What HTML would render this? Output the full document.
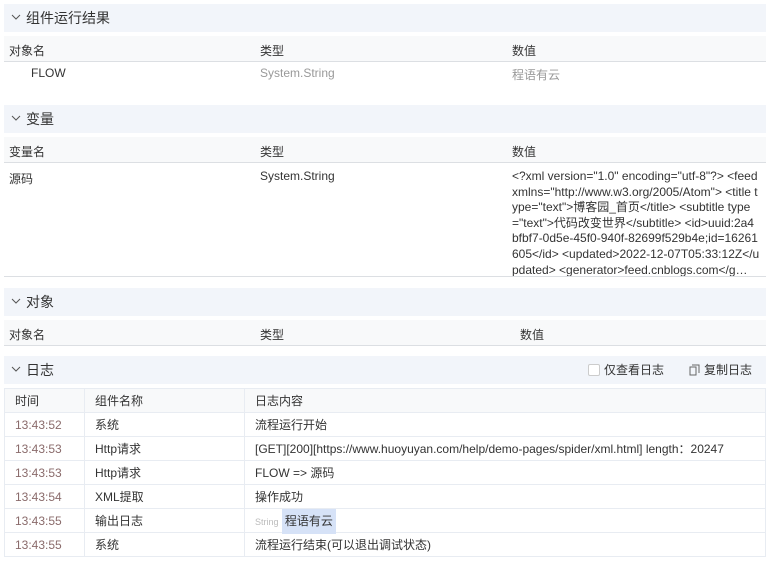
<!DOCTYPE html>
<html><head><meta charset="utf-8"><style>
*{margin:0;padding:0;box-sizing:border-box}
body{width:770px;height:561px;background:#fff;font-family:"Liberation Sans","Noto Sans CJK SC",sans-serif;font-size:12px;color:#333;position:relative;overflow:hidden}
.a{position:absolute}
.hd{position:absolute;left:4px;width:762px;height:28px;background:#f2f5fa;font-size:14px;line-height:28px;padding-left:22px;color:#333}
.hd svg{position:absolute;left:7px;top:10px}
.th{position:absolute;left:4px;width:762px;height:26px;background:#f8f9fa;border-bottom:1px solid #dcdfe3}
.t{position:absolute;white-space:nowrap}
.log{position:absolute;left:4px;top:388px;width:762px;border-collapse:collapse}
.log td{border:1px solid #e8ecf2;height:24px;padding-left:10px;white-space:nowrap}
.log tr:first-child td{background:#f8f9fa}
.tm{color:#8a6b6b}
</style></head><body>
<div class="hd" style="top:4px"><svg width="10" height="6" viewBox="0 0 10 6"><path d="M1 1l4 4 4-4" fill="none" stroke="#555" stroke-width="1"/></svg>组件运行结果</div>
<div class="th" style="top:36px"><span class="t" style="left:5px;top:6px">对象名</span><span class="t" style="left:256px;top:6px">类型</span><span class="t" style="left:508px;top:6px">数值</span></div>
<span class="t" style="left:31px;top:66px">FLOW</span><span class="t" style="left:260px;top:66px;color:#999">System.String</span><span class="t" style="left:512px;top:66px;color:#999">程语有云</span>

<div class="hd" style="top:105px"><svg width="10" height="6" viewBox="0 0 10 6"><path d="M1 1l4 4 4-4" fill="none" stroke="#555" stroke-width="1"/></svg>变量</div>
<div class="th" style="top:137px"><span class="t" style="left:5px;top:6px">变量名</span><span class="t" style="left:256px;top:6px">类型</span><span class="t" style="left:508px;top:6px">数值</span></div>
<span class="t" style="left:9px;top:170px">源码</span><span class="t" style="left:260px;top:169px">System.String</span>
<div class="a" style="left:512px;top:169px;width:248px;line-height:15.6px;word-break:break-all">&lt;?xml version="1.0" encoding="utf-8"?&gt; &lt;feed xmlns="http://www.w3.org/2005/Atom"&gt; &lt;title type="text"&gt;博客园_首页&lt;/title&gt; &lt;subtitle type="text"&gt;代码改变世界&lt;/subtitle&gt; &lt;id&gt;uuid:2a4bfbf7-0d5e-45f0-940f-82699f529b4e;id=16261605&lt;/id&gt; &lt;updated&gt;2022-12-07T05:33:12Z&lt;/updated&gt; &lt;generator&gt;feed.cnblogs.com&lt;/g…</div>
<div class="a" style="left:4px;top:276px;width:762px;border-top:1px solid #dcdfe3"></div>

<div class="hd" style="top:288px"><svg width="10" height="6" viewBox="0 0 10 6"><path d="M1 1l4 4 4-4" fill="none" stroke="#555" stroke-width="1"/></svg>对象</div>
<div class="th" style="top:320px"><span class="t" style="left:5px;top:6px">对象名</span><span class="t" style="left:256px;top:6px">类型</span><span class="t" style="left:516px;top:6px">数值</span></div>

<div class="hd" style="top:356px"><svg width="10" height="6" viewBox="0 0 10 6"><path d="M1 1l4 4 4-4" fill="none" stroke="#555" stroke-width="1"/></svg>日志
<span class="a" style="left:584px;top:8px;width:12px;height:12px;border:1px solid #ccc;border-radius:2px;background:#fff"></span>
<span class="t" style="left:600px;top:0;font-size:12px">仅查看日志</span>
<svg class="a" style="left:685px;top:8px" width="11" height="12" viewBox="0 0 11 12"><path d="M3 1h7v8M1 3h6v8H1z" fill="none" stroke="#666"/></svg>
<span class="t" style="left:700px;top:0;font-size:12px">复制日志</span></div>

<table class="log">
<tr><td style="width:80px">时间</td><td style="width:160px">组件名称</td><td>日志内容</td></tr>
<tr><td class="tm">13:43:52</td><td>系统</td><td>流程运行开始</td></tr>
<tr><td class="tm">13:43:53</td><td>Http请求</td><td>[GET][200][https://www.huoyuyan.com/help/demo-pages/spider/xml.html] length：20247</td></tr>
<tr><td class="tm">13:43:53</td><td>Http请求</td><td>FLOW =&gt; 源码</td></tr>
<tr><td class="tm">13:43:54</td><td>XML提取</td><td>操作成功</td></tr>
<tr><td class="tm">13:43:55</td><td>输出日志</td><td><span style="color:#bbb;font-size:9px">String</span> <span style="background:#d6e2f7;padding:5px 3px 6px">程语有云</span></td></tr>
<tr><td class="tm">13:43:55</td><td>系统</td><td>流程运行结束(可以退出调试状态)</td></tr>
</table>
</body></html>
